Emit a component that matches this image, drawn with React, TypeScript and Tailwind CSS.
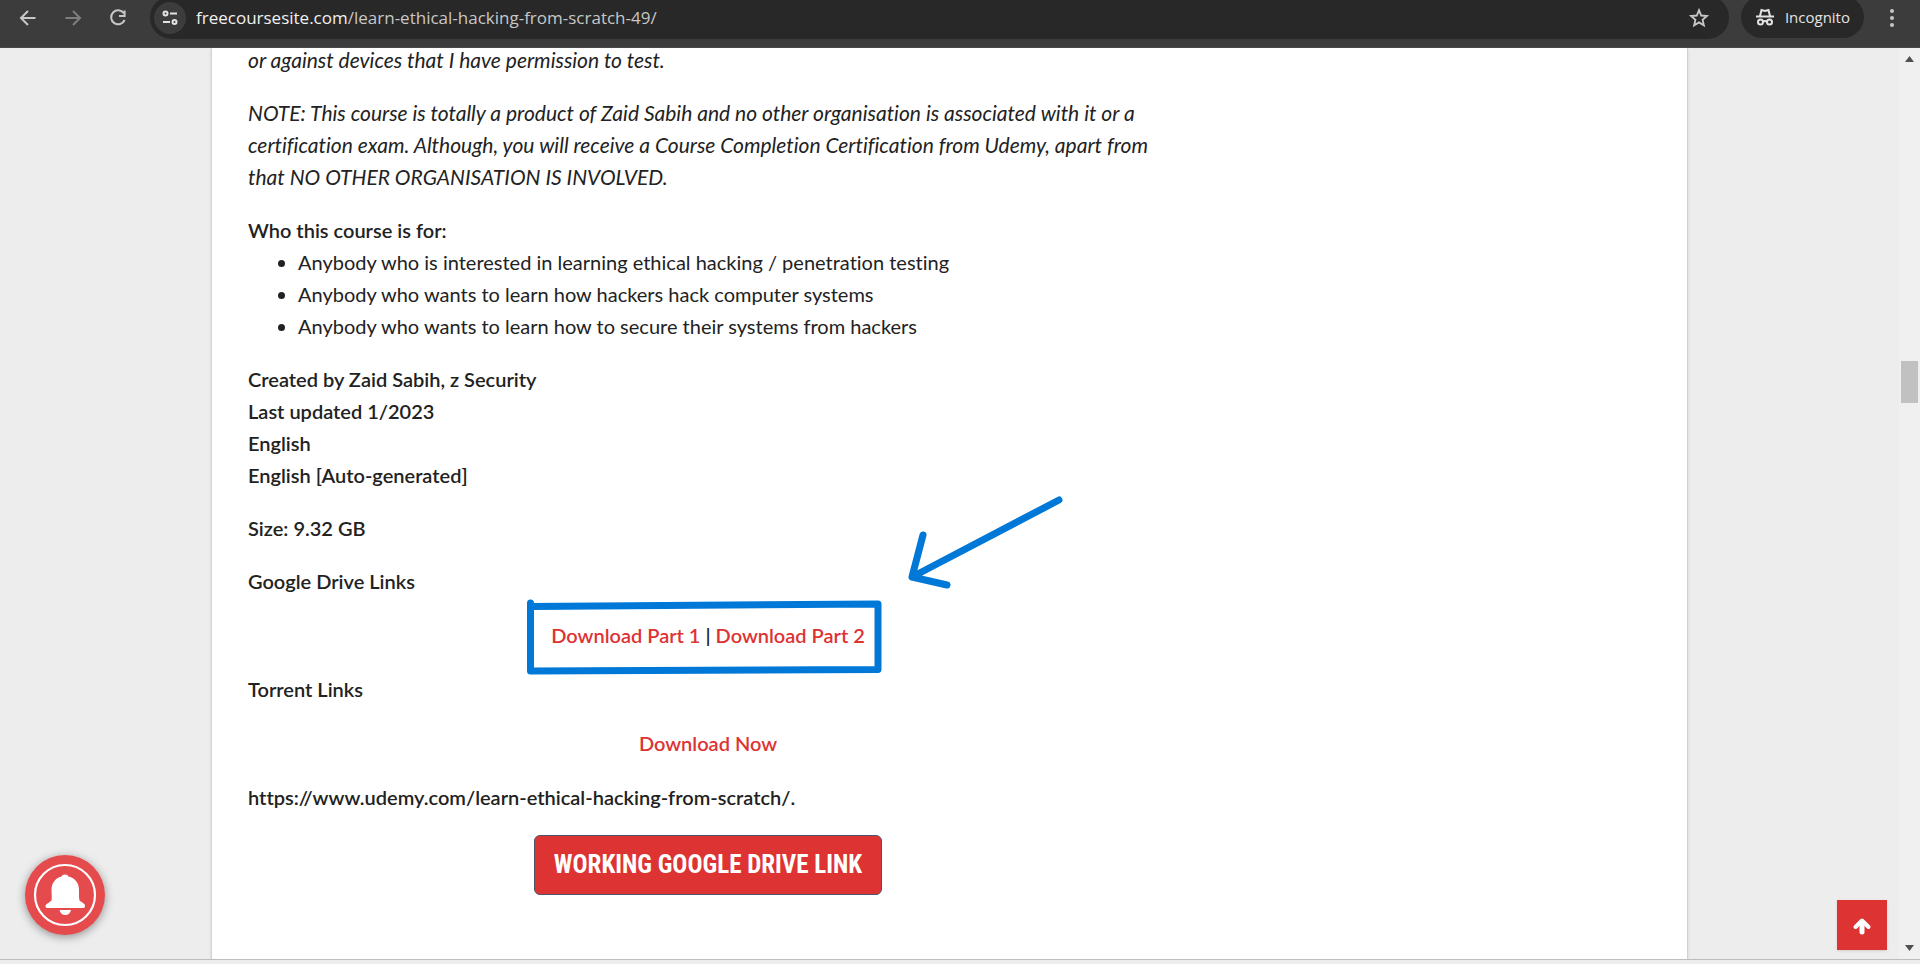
import React from "react";

const audience = [
  "Anybody who is interested in learning ethical hacking / penetration testing",
  "Anybody who wants to learn how hackers hack computer systems",
  "Anybody who wants to learn how to secure their systems from hackers",
];

const iconButton = "flex shrink-0 items-center justify-center text-[#c7c7c7]";

function BrowserBar() {
  return (
    <header className="flex h-12 shrink-0 items-start overflow-hidden border-b border-[#4c4748] bg-[#3c3c3c] font-['Open_Sans',sans-serif]">
      <nav aria-label="Browser" className="flex h-9 shrink-0 items-center gap-[21px] pl-4">
        <button aria-label="Back" className={iconButton}>
          <svg width="24" height="24" viewBox="0 0 24 24" fill="none" stroke="currentColor" strokeWidth="2">
            <path d="M19.500 12H5M12 5l-7 7 7 7" />
          </svg>
        </button>
        <button aria-label="Forward" disabled className="flex shrink-0 items-center justify-center text-[#7e7e7e]">
          <svg width="24" height="24" viewBox="0 0 24 24" fill="none" stroke="currentColor" strokeWidth="2">
            <path d="M4.500 12H19M12 5l7 7-7 7" />
          </svg>
        </button>
        <button aria-label="Reload" className={iconButton}>
          <svg width="24" height="24" viewBox="0 0 24 24" fill="none" stroke="currentColor" strokeWidth="2">
            <path d="M17.800 7.200A7 7 0 1 0 18.600 14M18.600 4.500V10H13" />
          </svg>
        </button>
      </nav>
      <div className="-mt-1 ml-5 flex h-[43px] min-w-0 flex-1 items-center rounded-full bg-[#282828] pr-[19px] pl-1">
        <button aria-label="View site information" className="flex size-8 shrink-0 items-center justify-center rounded-full bg-[#3c3c3c] text-[#e3e3e3]">
          <svg width="18" height="18" viewBox="0 0 18 18" fill="none" stroke="currentColor" strokeWidth="2">
            <circle cx="4.500" cy="4.500" r="2" />
            <path d="M9 4.500h7M2 13h7" />
            <circle cx="13.500" cy="13" r="2" />
          </svg>
        </button>
        <div role="textbox" aria-label="Address" className="ml-[10px] flex-1 truncate text-[17px] text-[#c7c7c7]">
          <span className="text-[#f1f1f1]">freecoursesite.com</span>/learn-ethical-hacking-from-scratch-49/
        </div>
        <button aria-label="Bookmark this tab" className={iconButton}>
          <svg width="22" height="22" viewBox="0 0 24 24" fill="none" stroke="currentColor" strokeWidth="2">
            <path d="M12 3.500l2.400 5.800 6.200.5-4.700 4.100 1.400 6.100L12 16.800 6.700 20l1.400-6.100-4.700-4.100 6.200-.5z" />
          </svg>
        </button>
      </div>
      <div className="-mt-1 ml-3 flex h-[42px] shrink-0 items-center gap-[10px] rounded-full bg-[#282828] px-[14px] text-[#e3e3e3]">
        <svg width="20" height="20" viewBox="0 0 20 20" fill="none" stroke="currentColor" strokeWidth="2">
          <path d="M1 9.500h18M5 9l1.500-6 3.500 1 3.500-1L15 9" />
          <circle cx="5.500" cy="15" r="2.500" />
          <circle cx="14.500" cy="15" r="2.500" />
          <path d="M8 14.500q2-1 4 0" />
        </svg>
        <span className="text-[15px]">Incognito</span>
      </div>
      <button aria-label="Menu" className="mr-4 ml-4 flex h-9 w-6 shrink-0 items-center justify-center text-[#c7c7c7]">
        <svg width="6" height="20" viewBox="0 0 6 20" fill="currentColor">
          <circle cx="3" cy="3" r="2" />
          <circle cx="3" cy="10" r="2" />
          <circle cx="3" cy="17" r="2" />
        </svg>
      </button>
    </header>
  );
}

function Annotation() {
  return (
    <svg
      aria-hidden="true"
      className="pointer-events-none absolute bottom-[-26px] left-[278px]"
      width="544"
      height="184"
      viewBox="0 0 544 184"
      fill="none"
      stroke="#0078d7"
      strokeWidth="7"
      strokeLinecap="round"
      strokeLinejoin="round"
    >
      <path d="M4.500 110V178L352 176.500V111L4.500 113.500" />
      <path d="M533 7L386 84L397 42M386 84L421 92" />
    </svg>
  );
}

function Article() {
  return (
    <article className="-mt-1 flex max-w-[920px] flex-col gap-[21px] pb-12 font-['Lato',sans-serif] text-[20px] leading-8 text-[#222] [font-variant-ligatures:no-common-ligatures]">
      <p className="text-[21px] leading-8 italic">or against devices that I have permission to test.</p>
      <p className="text-[21px] leading-8 italic">
        NOTE: This course is totally a product of Zaid Sabih and no other organisation is associated with it or a
        certification exam. Although, you will receive a Course Completion Certification from Udemy, apart from that NO
        OTHER ORGANISATION IS INVOLVED.
      </p>
      <section>
        <h2 className="font-semibold">Who this course is for:</h2>
        <ul className="list-disc pl-[50px]">
          {audience.map((item) => (
            <li key={item}>{item}</li>
          ))}
        </ul>
      </section>
      <p className="font-semibold">
        Created by Zaid Sabih, z Security
        <br />
        Last updated 1/2023
        <br />
        English
        <br />
        English [Auto-generated]
      </p>
      <p className="font-semibold">Size: 9.32 GB</p>
      <div className="flex flex-col gap-[22px] font-semibold">
        <p>Google Drive Links</p>
        <div className="relative text-center">
          <a href="#part-1" className="text-[#dd3333]">Download Part 1</a> | <a href="#part-2" className="text-[#dd3333]">Download Part 2</a>
          <Annotation />
        </div>
        <p>Torrent Links</p>
        <p className="text-center">
          <a href="#torrent" className="text-[#dd3333]">Download Now</a>
        </p>
        <p>https://www.udemy.com/learn-ethical-hacking-from-scratch/.</p>
        <div className="flex justify-center">
          <a
            href="#drive"
            className="flex h-[60px] items-center rounded-md border border-[#4a5568] bg-[#dd3333] px-[19px] font-['Roboto_Condensed','Liberation_Sans_Narrow',sans-serif] text-[25px] font-bold text-white"
          >
            WORKING GOOGLE DRIVE LINK
          </a>
        </div>
      </div>
    </article>
  );
}

export default function App() {
  return (
    <div className="flex min-h-screen flex-col bg-[#ededed]">
      <BrowserBar />
      <div className="flex flex-1 overflow-hidden border-b border-[#bdbdbd]">
        <div className="flex flex-1 justify-center">
          <main className="w-7/9 border-x border-[#d2d2d2] bg-white px-9 shadow-sm">
            <Article />
          </main>
        </div>
        <div className="flex w-[21px] shrink-0 flex-col items-center justify-between bg-[#f0f0f0] py-2 text-[#505050]">
          <svg width="9" height="6" viewBox="0 0 9 6" fill="currentColor"><path d="M0 6L4.500 0 9 6z" /></svg>
          <div className="mb-[244px] h-[42px] w-[17px] bg-[#c1c1c1]" />
          <svg width="9" height="6" viewBox="0 0 9 6" fill="currentColor"><path d="M0 0L4.500 6 9 0z" /></svg>
        </div>
      </div>
      <div className="h-1 shrink-0" />
      <button aria-label="Notifications" className="fixed bottom-[29px] left-[25px] size-20 rounded-full bg-[#e54b4d] shadow-[0_2px_10px_rgba(0,0,0,0.4)]">
        <svg width="80" height="80" viewBox="0 0 80 80" fill="#fff">
          <circle cx="40" cy="40" r="30" fill="none" stroke="#fff" strokeWidth="2.200" />
          <path d="M40 19.500c2 0 3 .8 3.500 2 7 1.500 10.500 7 10.500 13.500 0 4-.2 7 .5 10.500 2.500 2 6 3.500 5.500 5.500 0 1.500-.8 2-2 2H22.500c-1.300 0-2-.6-2-2 0-2 3.500-3 6-5.500.6-3.500 0-6.500 0-10.500 0-6.500 3.500-12 10-13.500.5-1.200 1.500-2 3.500-2z" />
          <path d="M34.500 55h11.500c-.5 3-2.800 5-5.700 5s-5.200-2-5.800-5z" />
        </svg>
      </button>
      <a href="#top" aria-label="Back to top" className="fixed right-[33px] bottom-[14px] flex size-[50px] items-center justify-center bg-[#dd3333] shadow-sm">
        <svg width="20" height="20" viewBox="0 0 20 20" fill="none" stroke="#fff" strokeWidth="5" strokeLinecap="round" strokeLinejoin="round">
          <path d="M10 7v10" />
          <path d="M3.500 12L10 5.500l6.500 6.500" strokeWidth="4" />
        </svg>
      </a>
    </div>
  );
}
